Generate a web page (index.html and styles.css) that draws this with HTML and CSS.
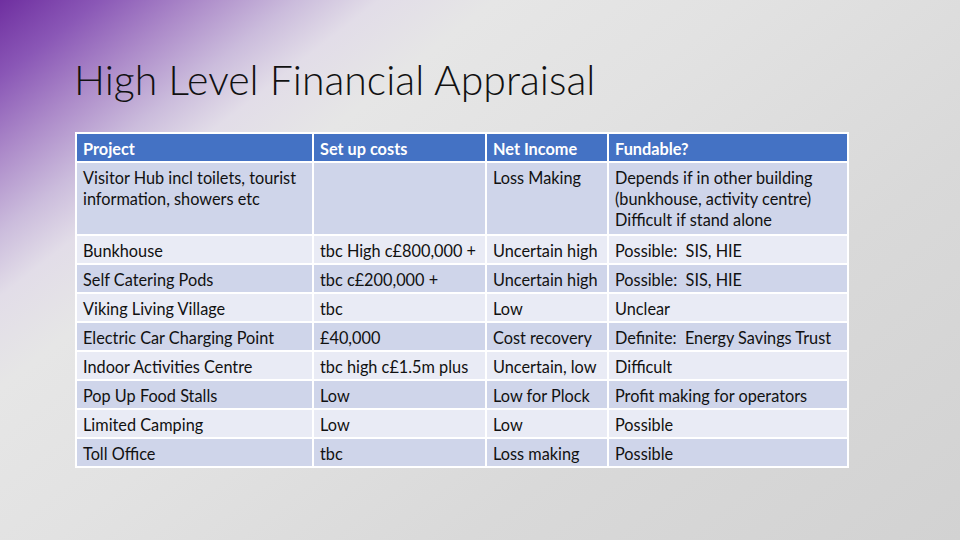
FILE: index.html
```html
<!DOCTYPE html>
<html>
<head>
<meta charset="utf-8">
<link rel="stylesheet" href="styles.css">
</head>
<body>
<div class="slide">
  <h1 class="title">High Level Financial Appraisal</h1>
  <table class="grid">
    <colgroup>
      <col class="c1"><col class="c2"><col class="c3"><col class="c4">
    </colgroup>
    <thead>
      <tr><th>Project</th><th>Set up costs</th><th>Net Income</th><th>Fundable?</th></tr>
    </thead>
    <tbody>
      <tr class="tall"><td>Visitor Hub incl toilets, tourist information, showers etc</td><td></td><td>Loss Making</td><td>Depends if in other building (bunkhouse, activity centre) Difficult if stand alone</td></tr>
      <tr><td>Bunkhouse</td><td>tbc High c£800,000 +</td><td>Uncertain high</td><td>Possible:&nbsp; SIS, HIE</td></tr>
      <tr><td>Self Catering Pods</td><td>tbc c£200,000 +</td><td>Uncertain high</td><td>Possible:&nbsp; SIS, HIE</td></tr>
      <tr><td>Viking Living Village</td><td>tbc</td><td>Low</td><td>Unclear</td></tr>
      <tr><td>Electric Car Charging Point</td><td>£40,000</td><td>Cost recovery</td><td>Definite:&nbsp; Energy Savings Trust</td></tr>
      <tr><td>Indoor Activities Centre</td><td>tbc high c£1.5m plus</td><td>Uncertain, low</td><td>Difficult</td></tr>
      <tr><td>Pop Up Food Stalls</td><td>Low</td><td>Low for Plock</td><td>Profit making for operators</td></tr>
      <tr><td>Limited Camping</td><td>Low</td><td>Low</td><td>Possible</td></tr>
      <tr><td>Toll Office</td><td>tbc</td><td>Loss making</td><td>Possible</td></tr>
    </tbody>
  </table>
</div>
</body>
</html>
```
FILE: styles.css
```css
html, body {
  margin: 0;
  padding: 0;
}
.slide {
  width: 960px;
  height: 540px;
  box-sizing: border-box;
  padding: 52px 0 0 74px;
  overflow: hidden;
  background: linear-gradient(142deg, #6f2fa0 0%, #8a57b6 6%, #ac8ac9 12%, #cbbcdc 18%, #e2dde8 23%, #e6e6e6 30%, #e2e2e2 45%, #d9d9d9 70%, #d2d2d2 100%);
  font-family: Lato, "Open Sans", sans-serif;
}
.title {
  margin: 0;
  font-family: Lato, sans-serif;
  font-weight: 300;
  font-size: 41px;
  line-height: 56px;
  color: #111;
}
.grid {
  margin-top: 24px;
  margin-left: 1px;
  border-collapse: collapse;
  table-layout: fixed;
  width: 772px;
  font-size: 16.3px;
  line-height: 21px;
  color: #111;
}
.c1 { width: 237px; }
.c2 { width: 173px; }
.c3 { width: 122px; }
.c4 { width: 240px; }
.grid th, .grid td {
  border: 2px solid #fff;
  padding: 4px 6px 2px;
  text-align: left;
  vertical-align: top;
}
.grid th {
  background: #4472c4;
  color: #fff;
  font-weight: 700;
}
.grid tbody tr.tall td { padding-bottom: 4px; }
.grid tbody tr:nth-child(odd) td { background: #cfd5ea; }
.grid tbody tr:nth-child(even) td { background: #e9ebf5; }
.grid tbody tr:not(.tall) td { white-space: nowrap; }
```
